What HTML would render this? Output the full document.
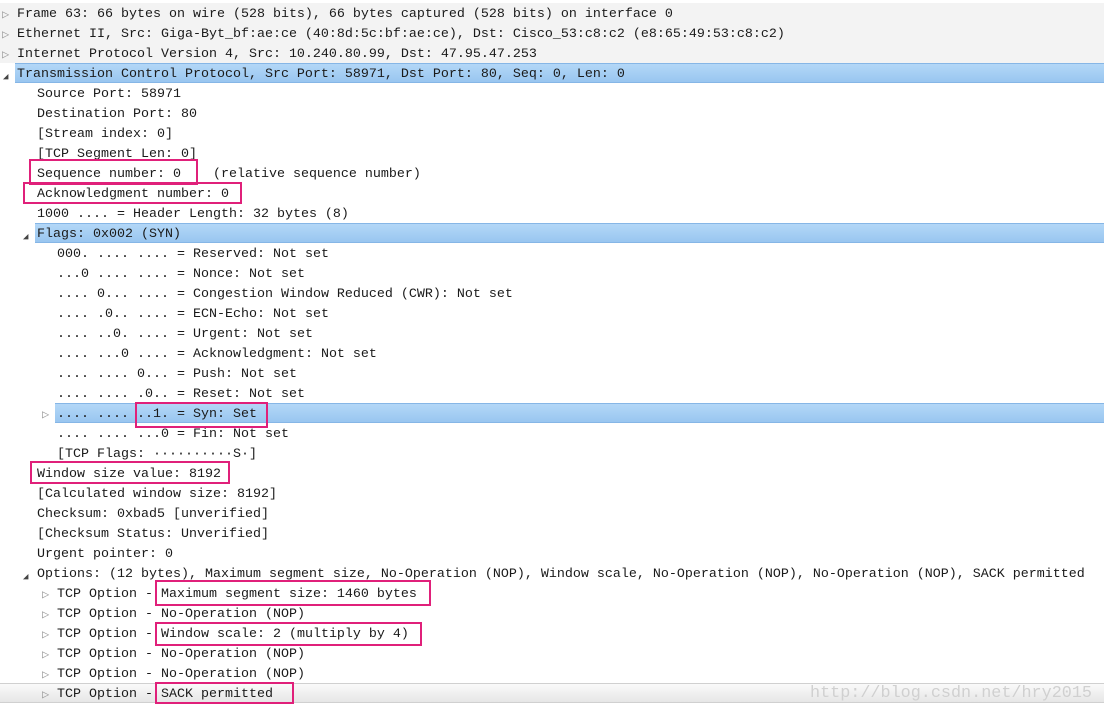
<!DOCTYPE html>
<html><head><meta charset="utf-8"><style>
body{margin:0;width:1104px;height:716px;background:#fff;position:relative;overflow:hidden;font-family:"Liberation Mono",monospace;font-size:13.33px;color:#1a1a1a}
.r{position:absolute;left:0;right:0;height:20px;line-height:20px;white-space:pre}
.r span.t{position:absolute;top:2px}
.g{background:#f3f3f3}
.hl{position:absolute;top:0;bottom:0;right:0;background:linear-gradient(#b3d7f7,#99c6f0);border-top:1px solid #86b6e6;border-bottom:1px solid #86b6e6;box-sizing:border-box}
.tri{position:absolute;top:2px;font-size:12px;color:#999}
.box{position:absolute;border:2px solid #e0207a;box-sizing:border-box}
.wm{position:absolute;left:0;right:0;top:683px;height:20px;background:linear-gradient(#fafafa,#e6e6e6);border-top:1px solid #d0d0d0;border-bottom:1px solid #d0d0d0;box-sizing:border-box}
.wmt{position:absolute;left:810px;top:683px;font-family:"Liberation Mono",monospace;font-size:16.8px;line-height:22px;color:#d0d0d0}
</style></head><body>
<div class="wm"></div><div class="wmt">http://blog.csdn.net/hry2015</div>
<div class="r g" style="top:3px"><span class="tri" style="left:2px">▷</span><span class="t" style="left:17px">Frame 63: 66 bytes on wire (528 bits), 66 bytes captured (528 bits) on interface 0</span></div>
<div class="r g" style="top:23px"><span class="tri" style="left:2px">▷</span><span class="t" style="left:17px">Ethernet II, Src: Giga-Byt_bf:ae:ce (40:8d:5c:bf:ae:ce), Dst: Cisco_53:c8:c2 (e8:65:49:53:c8:c2)</span></div>
<div class="r g" style="top:43px"><span class="tri" style="left:2px">▷</span><span class="t" style="left:17px">Internet Protocol Version 4, Src: 10.240.80.99, Dst: 47.95.47.253</span></div>
<div class="r" style="top:63px"><div class="hl" style="left:15px"></div><span class="tri" style="left:3px;color:#444;font-size:9px;top:4px">◢</span><span class="t" style="left:17px">Transmission Control Protocol, Src Port: 58971, Dst Port: 80, Seq: 0, Len: 0</span></div>
<div class="r" style="top:83px"><span class="t" style="left:37px">Source Port: 58971</span></div>
<div class="r" style="top:103px"><span class="t" style="left:37px">Destination Port: 80</span></div>
<div class="r" style="top:123px"><span class="t" style="left:37px">[Stream index: 0]</span></div>
<div class="r" style="top:143px"><span class="t" style="left:37px">[TCP Segment Len: 0]</span></div>
<div class="r" style="top:163px"><span class="t" style="left:37px">Sequence number: 0    (relative sequence number)</span></div>
<div class="r" style="top:183px"><span class="t" style="left:37px">Acknowledgment number: 0</span></div>
<div class="r" style="top:203px"><span class="t" style="left:37px">1000 .... = Header Length: 32 bytes (8)</span></div>
<div class="r" style="top:223px"><div class="hl" style="left:35px"></div><span class="tri" style="left:23px;color:#444;font-size:9px;top:4px">◢</span><span class="t" style="left:37px">Flags: 0x002 (SYN)</span></div>
<div class="r" style="top:243px"><span class="t" style="left:57px">000. .... .... = Reserved: Not set</span></div>
<div class="r" style="top:263px"><span class="t" style="left:57px">...0 .... .... = Nonce: Not set</span></div>
<div class="r" style="top:283px"><span class="t" style="left:57px">.... 0... .... = Congestion Window Reduced (CWR): Not set</span></div>
<div class="r" style="top:303px"><span class="t" style="left:57px">.... .0.. .... = ECN-Echo: Not set</span></div>
<div class="r" style="top:323px"><span class="t" style="left:57px">.... ..0. .... = Urgent: Not set</span></div>
<div class="r" style="top:343px"><span class="t" style="left:57px">.... ...0 .... = Acknowledgment: Not set</span></div>
<div class="r" style="top:363px"><span class="t" style="left:57px">.... .... 0... = Push: Not set</span></div>
<div class="r" style="top:383px"><span class="t" style="left:57px">.... .... .0.. = Reset: Not set</span></div>
<div class="r" style="top:403px"><div class="hl" style="left:55px"></div><span class="tri" style="left:42px">▷</span><span class="t" style="left:57px">.... .... ..1. = Syn: Set</span></div>
<div class="r" style="top:423px"><span class="t" style="left:57px">.... .... ...0 = Fin: Not set</span></div>
<div class="r" style="top:443px"><span class="t" style="left:57px">[TCP Flags: ··········S·]</span></div>
<div class="r" style="top:463px"><span class="t" style="left:37px">Window size value: 8192</span></div>
<div class="r" style="top:483px"><span class="t" style="left:37px">[Calculated window size: 8192]</span></div>
<div class="r" style="top:503px"><span class="t" style="left:37px">Checksum: 0xbad5 [unverified]</span></div>
<div class="r" style="top:523px"><span class="t" style="left:37px">[Checksum Status: Unverified]</span></div>
<div class="r" style="top:543px"><span class="t" style="left:37px">Urgent pointer: 0</span></div>
<div class="r" style="top:563px"><span class="tri" style="left:23px;color:#444;font-size:9px;top:4px">◢</span><span class="t" style="left:37px">Options: (12 bytes), Maximum segment size, No-Operation (NOP), Window scale, No-Operation (NOP), No-Operation (NOP), SACK permitted</span></div>
<div class="r" style="top:583px"><span class="tri" style="left:42px">▷</span><span class="t" style="left:57px">TCP Option - Maximum segment size: 1460 bytes</span></div>
<div class="r" style="top:603px"><span class="tri" style="left:42px">▷</span><span class="t" style="left:57px">TCP Option - No-Operation (NOP)</span></div>
<div class="r" style="top:623px"><span class="tri" style="left:42px">▷</span><span class="t" style="left:57px">TCP Option - Window scale: 2 (multiply by 4)</span></div>
<div class="r" style="top:643px"><span class="tri" style="left:42px">▷</span><span class="t" style="left:57px">TCP Option - No-Operation (NOP)</span></div>
<div class="r" style="top:663px"><span class="tri" style="left:42px">▷</span><span class="t" style="left:57px">TCP Option - No-Operation (NOP)</span></div>
<div class="r" style="top:683px"><span class="tri" style="left:42px">▷</span><span class="t" style="left:57px">TCP Option - SACK permitted</span></div>
<div class="box" style="left:29px;top:159px;width:169px;height:26px"></div>
<div class="box" style="left:23px;top:182px;width:219px;height:22px"></div>
<div class="box" style="left:135px;top:402px;width:133px;height:26px"></div>
<div class="box" style="left:30px;top:461px;width:200px;height:23px"></div>
<div class="box" style="left:155px;top:580px;width:276px;height:26px"></div>
<div class="box" style="left:155px;top:622px;width:267px;height:24px"></div>
<div class="box" style="left:155px;top:682px;width:139px;height:22px"></div>
</body></html>
